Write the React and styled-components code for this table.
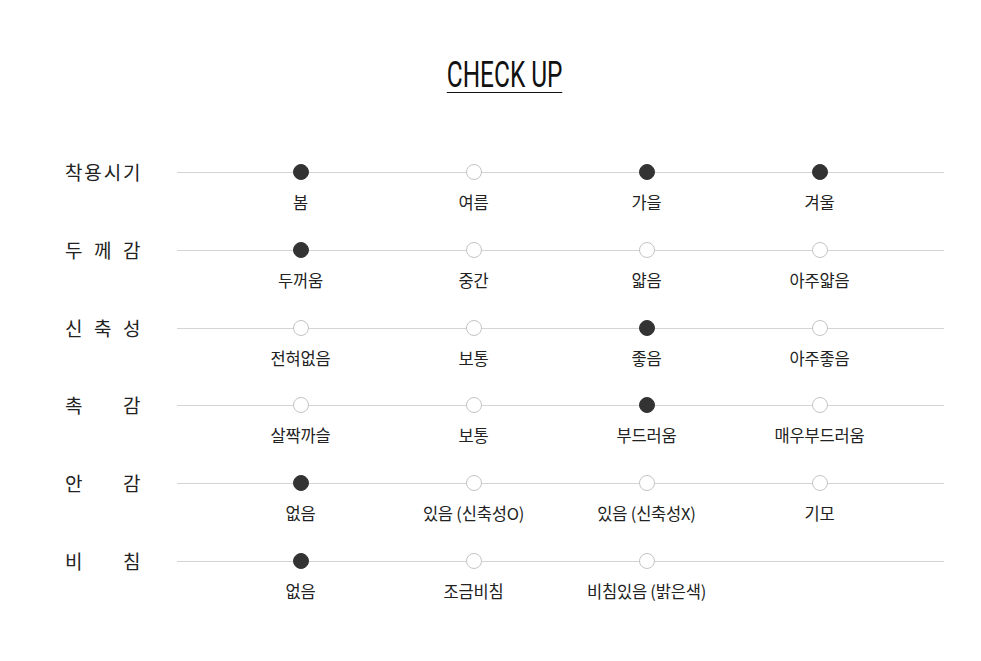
import React from "react";
import styled, { createGlobalStyle } from "styled-components";

const GlobalStyle = createGlobalStyle`
  body {
    margin: 0;
    background: #fff;
    font-family: "Noto Sans CJK KR", "Noto Sans", sans-serif;
  }
`;

const Page = styled.div`
  width: 879px;
  padding: 57px 0 0 65px;
`;

const TitleWrap = styled.div`
  display: flex;
  justify-content: center;
  margin-bottom: 71px;
`;

const Title = styled.h2`
  margin: 0;
  font-family: Roboto, "Liberation Sans", sans-serif;
  font-weight: 400;
  font-size: 37px;
  line-height: 35px;
  color: #111;
  border-bottom: 1.5px solid #111;
  transform: scaleX(0.66);
`;

const Row = styled.div`
  display: grid;
  grid-template-columns: 112px 1fr;
  height: 77.8px;
`;

const Label = styled.div`
  width: 76px;
  display: flex;
  justify-content: space-between;
  font-size: 19px;
  line-height: 16px;
  color: #222;
  letter-spacing: 0.5px;
`;

const Track = styled.div`
  position: relative;
  display: grid;
  grid-template-columns: repeat(4, 173px);
  padding: 0 37px;

  &::before {
    content: "";
    position: absolute;
    left: 0;
    right: 0;
    top: 8px;
    height: 1px;
    background: #d4d4d4;
  }
`;

const Cell = styled.div`
  display: flex;
  flex-direction: column;
  align-items: center;
  position: relative;
`;

const Dot = styled.span`
  width: 16px;
  height: 16px;
  box-sizing: border-box;
  border-radius: 50%;
  background: ${(p) => (p.$on ? "#333" : "#fff")};
  border: 1px solid ${(p) => (p.$on ? "#333" : "#c4c4c4")};
`;

const Option = styled.span`
  margin-top: 12px;
  font-size: 16.5px;
  line-height: 20px;
  color: #222;
  letter-spacing: -0.2px;
  white-space: nowrap;
`;

const rows = [
  { label: ["착", "용", "시", "기"], opts: ["봄", "여름", "가을", "겨울"], on: [0, 2, 3] },
  { label: ["두", "께", "감"], opts: ["두꺼움", "중간", "얇음", "아주얇음"], on: [0] },
  { label: ["신", "축", "성"], opts: ["전혀없음", "보통", "좋음", "아주좋음"], on: [2] },
  { label: ["촉", "감"], opts: ["살짝까슬", "보통", "부드러움", "매우부드러움"], on: [2] },
  { label: ["안", "감"], opts: ["없음", "있음 (신축성O)", "있음 (신축성X)", "기모"], on: [0] },
  { label: ["비", "침"], opts: ["없음", "조금비침", "비침있음 (밝은색)"], on: [0] },
];

export default function App() {
  return (
    <Page>
      <GlobalStyle />
      <TitleWrap>
        <Title>CHECK UP</Title>
      </TitleWrap>
      {rows.map((r, i) => (
        <Row key={i}>
          <Label>
            {r.label.map((c, j) => (
              <span key={j}>{c}</span>
            ))}
          </Label>
          <Track>
            {r.opts.map((o, j) => (
              <Cell key={j}>
                <Dot $on={r.on.includes(j)} />
                <Option>{o}</Option>
              </Cell>
            ))}
          </Track>
        </Row>
      ))}
    </Page>
  );
}
